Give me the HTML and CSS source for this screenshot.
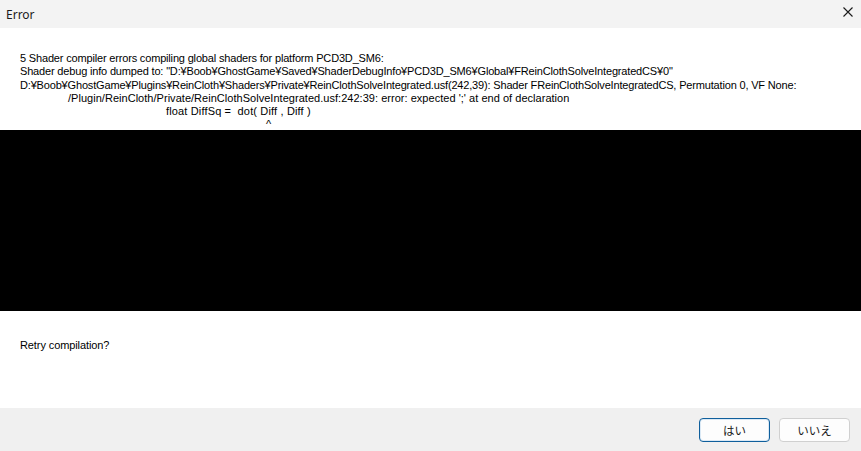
FILE: index.html
```html
<!DOCTYPE html>
<html lang="ja">
<head>
    <meta charset="UTF-8">
    <meta name="viewport" content="width=device-width, initial-scale=1.0">
    <title>Error</title>
    <link rel="stylesheet" href="styles.css">
</head>
<body>
    <div class="dialog">
        <div class="title-bar">
            <span class="title">Error</span>
            <button class="close-btn" aria-label="Close">
                <svg width="10" height="10" viewBox="0 0 10 10">
                    <path d="M0.5 0.5 L9.5 9.5 M9.5 0.5 L0.5 9.5" stroke="#1a1a1a" stroke-width="1.1" fill="none"/>
                </svg>
            </button>
        </div>
        <div class="message">
            <div class="line first">5 Shader compiler errors compiling global shaders for platform PCD3D_SM6:</div>
            <div class="line">Shader debug info dumped to: "D:¥Boob¥GhostGame¥Saved¥ShaderDebugInfo¥PCD3D_SM6¥Global¥FReinClothSolveIntegratedCS¥0"</div>
            <div class="line">D:¥Boob¥GhostGame¥Plugins¥ReinCloth¥Shaders¥Private¥ReinClothSolveIntegrated.usf(242,39): Shader FReinClothSolveIntegratedCS, Permutation 0, VF None:</div>
            <div class="line indent">/Plugin/ReinCloth/Private/ReinClothSolveIntegrated.usf:242:39: error: expected ';' at end of declaration</div>
            <div class="line code">float DiffSq =&nbsp; dot( Diff , Diff )</div>
            <div class="line caret">^</div>
        </div>
        <div class="redacted"></div>
        <div class="question">Retry compilation?</div>
        <div class="footer">
            <button class="btn default">はい</button>
            <button class="btn">いいえ</button>
        </div>
    </div>
</body>
</html>
```

FILE: styles.css
```css
 html, body {
     margin: 0;
     padding: 0;
 }
 body {
     width: 861px;
     height: 451px;
     overflow: hidden;
     background-color: white;
 }
 .dialog {
     display: flex;
     flex-direction: column;
     height: 451px;
 }
 .title-bar {
     height: 28px;
     flex: none;
     display: flex;
     align-items: center;
     justify-content: space-between;
     background-color: #f3f3f3;
     padding-left: 6px;
 }
 .title {
     font-family: "Noto Sans", sans-serif;
     font-size: 12px;
     color: #1a1a1a;
 }
 .close-btn {
     width: 46px;
     height: 28px;
     border: none;
     background: none;
     padding: 0 0 4px 20px;
     display: flex;
     align-items: center;
     justify-content: center;
 }
 .message {
     height: 102px;
     flex: none;
     box-sizing: border-box;
     padding: 24px 0 0 20px;
     font-family: "Liberation Sans", sans-serif;
     font-size: 11px;
     letter-spacing: -0.17px;
     line-height: 13.3px;
     color: black;
     white-space: nowrap;
 }
 .line.indent {
     padding-left: 48px;
     letter-spacing: 0.03px;
 }
 .line.code {
     padding-left: 146px;
     letter-spacing: 0.15px;
 }
 .line.caret {
     padding-left: 246px;
 }
 .redacted {
     height: 181px;
     flex: none;
     background-color: black;
 }
 .question {
     flex: 1;
     padding: 28px 0 0 20px;
     font-family: "Liberation Sans", sans-serif;
     font-size: 11px;
     letter-spacing: -0.1px;
     color: black;
 }
 .footer {
     height: 43px;
     flex: none;
     background-color: #f0f0f0;
     display: flex;
     justify-content: flex-end;
     align-items: center;
     gap: 9px;
     padding-right: 11px;
 }
 .btn {
     width: 71px;
     height: 24px;
     box-sizing: border-box;
     background-color: #fdfdfd;
     border: 1px solid #d0d0d0;
     border-radius: 4px;
     font-family: "Noto Sans CJK JP", sans-serif;
     font-size: 11.5px;
     color: #1a1a1a;
     padding: 0;
 }
 .btn.default {
     border: 1px solid #0f5f9c;
     box-shadow: inset 0 0 0 1px #dbe9f5;
 }
```
